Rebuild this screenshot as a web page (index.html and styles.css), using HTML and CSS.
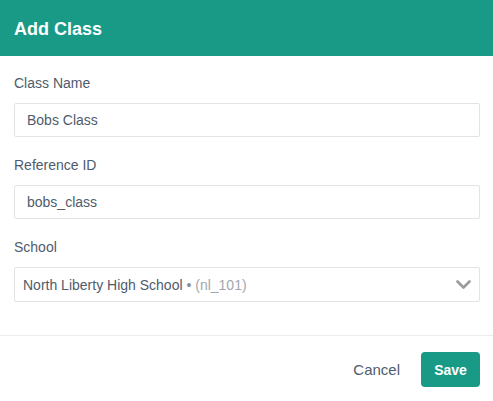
FILE: index.html
```html
<!DOCTYPE html>
<html>
<head>
<meta charset="utf-8">
<link rel="stylesheet" href="styles.css">
</head>
<body>
<div class="modal">
  <div class="header"><h1 class="title">Add Class</h1></div>
  <div class="content">
    <div class="field">
      <label class="label">Class Name</label>
      <div class="input">Bobs Class</div>
    </div>
    <div class="field">
      <label class="label">Reference ID</label>
      <div class="input">bobs_class</div>
    </div>
    <div class="field">
      <label class="label">School</label>
      <div class="select">
        <span class="sel-text">North Liberty High School <span class="dot">•</span> <span class="code">(nl_101)</span></span>
        <svg class="chev" width="15" height="10" viewBox="0 0 15 10"><path d="M1.5 1.5 L7.5 7.5 L13.5 1.5" fill="none" stroke="#9b9b9b" stroke-width="2.6" stroke-linecap="round" stroke-linejoin="round"/></svg>
      </div>
    </div>
  </div>
  <div class="footer">
    <button class="btn-cancel">Cancel</button>
    <button class="btn-save">Save</button>
  </div>
</div>
</body>
</html>
```
FILE: styles.css
```css
html, body {
  margin: 0;
  padding: 0;
  background: #ffffff;
  font-family: "Liberation Sans", Arial, sans-serif;
  color: #4a5568;
}
.modal {
  width: 493px;
  height: 401px;
  display: flex;
  flex-direction: column;
}
.header {
  height: 56px;
  background: #189a87;
  display: flex;
  align-items: center;
  padding: 0 14px;
  box-sizing: border-box;
}
.title {
  margin: 0;
  font-size: 18px;
  font-weight: bold;
  color: #ffffff;
  line-height: 24px;
  padding-top: 1px;
}
.content {
  padding: 17px 13px 33px 14px;
  display: flex;
  flex-direction: column;
  gap: 18px;
  border-bottom: 1px solid #ececec;
}
.field {
  display: flex;
  flex-direction: column;
  gap: 10px;
}
.label {
  font-size: 14px;
  line-height: 20px;
  color: #4f5b6d;
}
.input {
  height: 34px;
  box-sizing: border-box;
  border: 1px solid #e3e3e3;
  border-radius: 2px;
  padding: 0 12px;
  display: flex;
  align-items: center;
  font-size: 14px;
  color: #4f5b6d;
}
.select {
  height: 35px;
  box-sizing: border-box;
  border: 1px solid #e3e3e3;
  border-radius: 2px;
  padding: 0 8px 0 8px;
  display: flex;
  align-items: center;
  justify-content: space-between;
  font-size: 14px;
  color: #4f5b6d;
}
.dot {
  color: #8a8f98;
}
.code {
  color: #a3a7ad;
  font-size: 14px;
}
.chev {
  display: block;
  margin-top: 1px;
}
.footer {
  display: flex;
  justify-content: flex-end;
  align-items: center;
  padding: 16px 13px 0 0;
  gap: 21px;
}
.btn-cancel {
  background: none;
  border: none;
  padding: 0;
  font-family: "Liberation Sans", Arial, sans-serif;
  font-size: 15px;
  color: #4f5b6d;
  cursor: pointer;
}
.btn-save {
  height: 35px;
  width: 59px;
  border: none;
  border-radius: 4px;
  background: #189a87;
  color: #ffffff;
  font-family: "Liberation Sans", Arial, sans-serif;
  font-weight: bold;
  font-size: 14px;
  cursor: pointer;
}
```
